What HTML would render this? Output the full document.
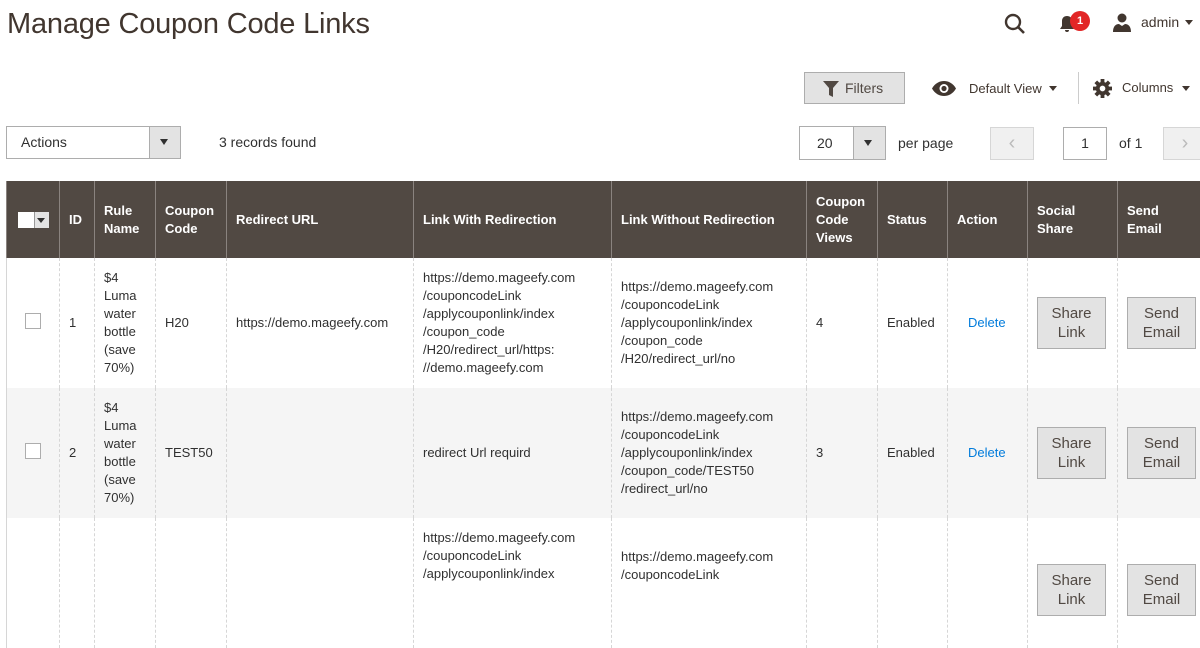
<!DOCTYPE html>
<html><head><meta charset="utf-8"><style>
*{box-sizing:border-box}
body{margin:0;width:1200px;height:570px;overflow:hidden;background:#fff;font-family:"Liberation Sans",sans-serif;color:#303030;font-size:13px;position:relative}
.a{position:absolute}
h1{position:absolute;left:7px;top:8px;margin:0;font-weight:normal;font-size:29px;color:#41362f;letter-spacing:-0.2px}
.btn{background:#e3e3e3;border:1px solid #adadad;color:#514943}
table{position:absolute;left:6px;top:181px;border-collapse:collapse;table-layout:fixed;width:1210px}
th{background:#514943;color:#fff;font-weight:bold;text-align:left;padding:0 9px;border-left:1px solid #8a837f;border-right:1px solid #8a837f;height:77px;font-size:13px;line-height:18px;vertical-align:middle}
td{padding:0 9px;border-left:1px dashed #d6d6d6;font-size:13px;line-height:18px;vertical-align:middle;height:130px;color:#303030}
tr.g td{background:#f5f5f5}
td:first-child{border-left:1px solid #d6d6d6}
.cb{display:inline-block;width:16px;height:16px;border:1px solid #adadad;background:#fff;margin-left:9px}
.del{color:#007bdb}
.sb{display:inline-block;background:#e3e3e3;border:1px solid #adadad;color:#514943;font-size:15px;line-height:19px;text-align:center;padding:6px 0;width:69px}
</style></head><body>
<h1>Manage Coupon Code Links</h1>
<svg class="a" style="left:1004px;top:13px" width="22" height="22" viewBox="0 0 22 22"><circle cx="9" cy="9" r="7" fill="none" stroke="#41362f" stroke-width="2.4"/><line x1="14" y1="14" x2="20" y2="20" stroke="#41362f" stroke-width="2.6"/></svg>
<svg class="a" style="left:1059px;top:15px" width="16" height="18" viewBox="0 0 16 18"><path d="M8 1c-3 0-5 2-5 5v5l-2 3h14l-2-3V6c0-3-2-5-5-5zM6 15a2 2 0 0 0 4 0z" fill="#41362f"/></svg>
<div class="a" style="left:1070px;top:11px;width:20px;height:20px;border-radius:10px;background:#e22626;color:#fff;font-size:11px;font-weight:bold;text-align:center;line-height:20px">1</div>
<svg class="a" style="left:1113px;top:13px" width="18" height="19" viewBox="0 0 18 19"><circle cx="9" cy="5" r="4.5" fill="#41362f"/><path d="M0 19c0-6 3-8 6-8l3 2 3-2c3 0 6 2 6 8z" fill="#41362f"/></svg>
<div class="a" style="left:1141px;top:14px;font-size:14px;color:#41362f">admin</div>
<div class="a" style="left:1185px;top:20px;border:4px solid transparent;border-top:5px solid #41362f"></div>

<div class="a btn" style="left:804px;top:72px;width:101px;height:32px"></div>
<svg class="a" style="left:823px;top:81px" width="16" height="16" viewBox="0 0 16 16"><path d="M0 0h16L10 7v9L6 14V7z" fill="#514943"/></svg>
<div class="a" style="left:845px;top:80px;font-size:14px;color:#514943">Filters</div>
<svg class="a" style="left:932px;top:81px" width="24" height="15" viewBox="0 0 24 15"><path d="M0 7.5C3 2 8 0 12 0s9 2 12 7.5C21 13 16 15 12 15S3 13 0 7.5z" fill="#41362f"/><circle cx="12" cy="7.5" r="4.5" fill="#fff"/><circle cx="12" cy="7.5" r="2.6" fill="#41362f"/></svg>
<div class="a" style="left:969px;top:81px;font-size:13px;color:#41362f">Default View</div>
<div class="a" style="left:1049px;top:86px;border:4px solid transparent;border-top:5px solid #41362f"></div>
<div class="a" style="left:1078px;top:72px;width:1px;height:32px;background:#ccc"></div>
<svg class="a" style="left:1093px;top:79px" width="19" height="19" viewBox="0 0 20 20"><g fill="#41362f"><circle cx="10" cy="10" r="7"/><rect x="8" y="0" width="4" height="20"/><rect x="0" y="8" width="20" height="4"/><rect x="8" y="0" width="4" height="20" transform="rotate(45 10 10)"/><rect x="8" y="0" width="4" height="20" transform="rotate(-45 10 10)"/></g><circle cx="10" cy="10" r="3" fill="#fff"/></svg>
<div class="a" style="left:1122px;top:80px;font-size:13px;color:#41362f">Columns</div>
<div class="a" style="left:1182px;top:86px;border:4px solid transparent;border-top:5px solid #41362f"></div>

<div class="a" style="left:6px;top:126px;width:175px;height:33px;border:1px solid #adadad"></div>
<div class="a" style="left:21px;top:134px;font-size:14px">Actions</div>
<div class="a" style="left:149px;top:127px;width:31px;height:31px;background:#e3e3e3;border-left:1px solid #adadad"></div>
<div class="a" style="left:160px;top:139px;border:4px solid transparent;border-top:6px solid #303030"></div>
<div class="a" style="left:219px;top:134px;font-size:14px">3 records found</div>

<div class="a" style="left:799px;top:126px;width:87px;height:34px;border:1px solid #adadad"></div>
<div class="a" style="left:817px;top:135px;font-size:14px">20</div>
<div class="a" style="left:853px;top:127px;width:32px;height:32px;background:#e3e3e3;border-left:1px solid #adadad"></div>
<div class="a" style="left:864px;top:140px;border:4px solid transparent;border-top:6px solid #303030"></div>
<div class="a" style="left:898px;top:135px;font-size:14px">per page</div>
<div class="a" style="left:990px;top:127px;width:44px;height:33px;background:#f0f0f0;border:1px solid #d6d6d6;color:#bbb;text-align:center;font-size:20px;line-height:30px">&#8249;</div>
<div class="a" style="left:1063px;top:127px;width:44px;height:33px;border:1px solid #adadad;text-align:center;line-height:31px;font-size:14px">1</div>
<div class="a" style="left:1119px;top:135px;font-size:14px">of 1</div>
<div class="a" style="left:1163px;top:127px;width:44px;height:33px;background:#f0f0f0;border:1px solid #d6d6d6;color:#bbb;text-align:center;font-size:20px;line-height:30px">&#8250;</div>

<table>
<colgroup><col style="width:53px"><col style="width:35px"><col style="width:61px"><col style="width:71px"><col style="width:187px"><col style="width:198px"><col style="width:195px"><col style="width:71px"><col style="width:70px"><col style="width:80px"><col style="width:90px"><col style="width:99px"></colgroup>
<tr><th style="padding:0 11px"><span style="display:inline-block;width:31px;height:16px;background:#fff;position:relative;vertical-align:middle"><span style="position:absolute;right:0;top:0;width:15px;height:16px;background:#e3e3e3;border-left:1px solid #999"></span><span style="position:absolute;right:4px;top:6px;border:4px solid transparent;border-top:5px solid #303030"></span></span></th><th>ID</th><th>Rule Name</th><th>Coupon Code</th><th>Redirect URL</th><th>Link With Redirection</th><th>Link Without Redirection</th><th>Coupon Code Views</th><th>Status</th><th>Action</th><th>Social Share</th><th>Send<br>Email</th></tr>
<tr><td><span class="cb"></span></td><td>1</td><td>$4 Luma water bottle (save 70%)</td><td>H20</td><td>https://demo.mageefy.com</td><td>https://demo.mageefy.com<br>/couponcodeLink<br>/applycouponlink/index<br>/coupon_code<br>/H20/redirect_url/https:<br>//demo.mageefy.com</td><td>https://demo.mageefy.com<br>/couponcodeLink<br>/applycouponlink/index<br>/coupon_code<br>/H20/redirect_url/no</td><td>4</td><td>Enabled</td><td style="padding-left:20px"><span class="del">Delete</span></td><td><span class="sb">Share<br>Link</span></td><td><span class="sb">Send<br>Email</span></td></tr>
<tr class="g"><td><span class="cb"></span></td><td>2</td><td>$4 Luma water bottle (save 70%)</td><td>TEST50</td><td></td><td>redirect Url requird</td><td>https://demo.mageefy.com<br>/couponcodeLink<br>/applycouponlink/index<br>/coupon_code/TEST50<br>/redirect_url/no</td><td>3</td><td>Enabled</td><td style="padding-left:20px"><span class="del">Delete</span></td><td><span class="sb">Share<br>Link</span></td><td><span class="sb">Send<br>Email</span></td></tr>
<tr><td style="vertical-align:top"></td><td></td><td></td><td></td><td></td><td style="vertical-align:top;padding-top:11px">https://demo.mageefy.com<br>/couponcodeLink<br>/applycouponlink/index</td><td style="vertical-align:top;padding-top:30px">https://demo.mageefy.com<br>/couponcodeLink</td><td></td><td></td><td></td><td style="vertical-align:top;padding-top:46px"><span class="sb">Share<br>Link</span></td><td style="vertical-align:top;padding-top:46px"><span class="sb">Send<br>Email</span></td></tr>
</table>
</body></html>
